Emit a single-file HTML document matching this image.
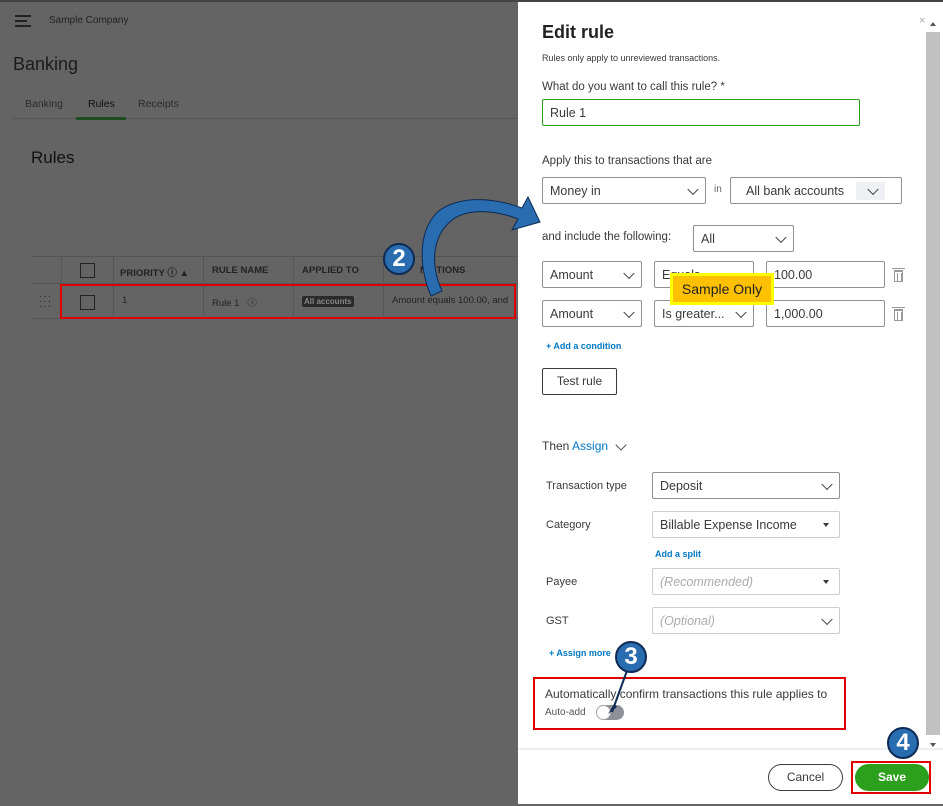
<!DOCTYPE html>
<html><head><meta charset="utf-8"><style>
*{box-sizing:border-box;margin:0;padding:0}
body{width:943px;height:806px;overflow:hidden;background:#646464;font-family:"Liberation Sans",sans-serif;position:relative;color:#222}
.a{position:absolute}
.box{position:absolute;border:1px solid #8d9096;border-radius:2px;background:#fff;font-size:12.5px;color:#393a3d;padding-left:7px;display:flex;align-items:center}
.chev{position:absolute;right:8px;top:50%;width:8px;height:8px;border-right:1.6px solid #393a3d;border-bottom:1.6px solid #393a3d;transform:translateY(-70%) rotate(45deg)}
.tri{position:absolute;right:10px;top:50%;border-left:3.5px solid transparent;border-right:3.5px solid transparent;border-top:4px solid #393a3d;transform:translateY(-50%)}
.lbl{position:absolute;font-size:11px;color:#393a3d}
.link{position:absolute;font-size:9px;color:#0077c5;font-weight:bold}
.badge{position:absolute;width:32px;height:32px;border-radius:50%;background:#2a6cb0;border:2px solid #0d2b55;color:#fff;font-weight:bold;font-size:24px;text-align:center;line-height:28px}
.tr{position:absolute;width:9px;height:12px;border:1px solid #999;border-top:2px solid #999}
.tr:before{content:"";position:absolute;left:-3px;top:-4px;width:13px;height:1px;background:#999}
.tr:after{content:"";position:absolute;left:2px;top:1px;width:3px;height:8px;border-left:1px solid #999;border-right:1px solid #999}
</style></head><body>
<div class="a" style="left:0;top:0;width:943px;height:2px;background:#444"></div>
<div class="a" style="left:15px;top:15px;width:16px;height:12px;border-top:2px solid #222;border-bottom:2px solid #222"></div>
<div class="a" style="left:15px;top:20px;width:12px;height:2px;background:#222"></div>
<div class="a" style="left:49px;top:15px;font-size:10px;color:#222">Sample Company</div>
<div class="a" style="left:13px;top:54px;font-size:18px;color:#1b1b1b">Banking</div>
<div class="a" style="left:25px;top:98px;font-size:10.5px;color:#2b2b2b">Banking</div>
<div class="a" style="left:88px;top:98px;font-size:10.5px;color:#111">Rules</div>
<div class="a" style="left:138px;top:98px;font-size:10.5px;color:#2b2b2b">Receipts</div>
<div class="a" style="left:13px;top:118px;width:505px;height:1px;background:#555"></div>
<div class="a" style="left:76px;top:117px;width:50px;height:3px;background:#1f4d1f"></div>
<div class="a" style="left:31px;top:148px;font-size:17px;color:#111">Rules</div>
<div class="a" style="left:31px;top:256px;width:487px;height:1px;background:#555"></div>
<div class="a" style="left:31px;top:283px;width:487px;height:1px;background:#555"></div>
<div class="a" style="left:31px;top:318px;width:487px;height:1px;background:#555"></div>
<div class="a" style="left:61px;top:256px;width:1px;height:62px;background:#555"></div>
<div class="a" style="left:113px;top:256px;width:1px;height:62px;background:#555"></div>
<div class="a" style="left:203px;top:256px;width:1px;height:62px;background:#555"></div>
<div class="a" style="left:293px;top:256px;width:1px;height:62px;background:#555"></div>
<div class="a" style="left:383px;top:256px;width:1px;height:62px;background:#555"></div>
<div class="a" style="left:80px;top:263px;width:15px;height:15px;border:1px solid #222"></div>
<div class="a" style="left:80px;top:295px;width:15px;height:15px;border:1px solid #222"></div>
<div class="a" style="left:120px;top:265px;font-size:9.5px;font-weight:bold;color:#222">PRIORITY ⓘ ▲</div>
<div class="a" style="left:212px;top:265px;font-size:9.5px;font-weight:bold;color:#222">RULE NAME</div>
<div class="a" style="left:302px;top:265px;font-size:9.5px;font-weight:bold;color:#222">APPLIED TO</div>
<div class="a" style="left:420px;top:265px;font-size:9.5px;font-weight:bold;color:#222">NDITIONS</div>
<div class="a" style="left:39px;top:294px;font-size:10px;color:#222;letter-spacing:1px;line-height:5px">···<br>···<br>···</div>
<div class="a" style="left:122px;top:295px;font-size:9.5px;color:#222">1</div>
<div class="a" style="left:212px;top:295px;font-size:9.5px;color:#222">Rule 1 &nbsp; ⓘ</div>
<div class="a" style="left:302px;top:296px;font-size:8px;font-weight:bold;color:#888;background:#2a2a2a;padding:1px 2px;border-radius:2px">All accounts</div>
<div class="a" style="left:392px;top:295px;font-size:9.5px;color:#222">Amount equals 100.00, and</div>
<div class="a" style="left:60px;top:284px;width:456px;height:35px;border:2px solid #e00000"></div>
<div class="a" style="left:518px;top:2px;width:425px;height:802px;background:#fff"></div>
<div class="a" style="left:926px;top:32px;width:14px;height:703px;background:#c1c1c1"></div>
<div class="a" style="left:919px;top:15px;font-size:11px;color:#aaa">×</div>
<div class="a" style="left:930px;top:22px;border-left:3px solid transparent;border-right:3px solid transparent;border-bottom:4px solid #555"></div>
<div class="a" style="left:930px;top:743px;border-left:3px solid transparent;border-right:3px solid transparent;border-top:4px solid #555"></div>
<div class="a" style="left:542px;top:22px;font-size:18px;font-weight:bold;color:#222">Edit rule</div>
<div class="a" style="left:542px;top:53px;font-size:9px;color:#393a3d">Rules only apply to unreviewed transactions.</div>
<div class="a" style="left:542px;top:81px;font-size:11.5px;color:#393a3d">What do you want to call this rule? *</div>
<div class="box" style="left:542px;top:99px;width:318px;height:27px;border-color:#2ca01c">Rule 1</div>
<div class="a" style="left:542px;top:155px;font-size:11.5px;color:#393a3d">Apply this to transactions that are</div>
<div class="box" style="left:542px;top:177px;width:164px;height:27px">Money in<span class="chev"></span></div>
<div class="a" style="left:714px;top:184px;font-size:10px;color:#666">in</div>
<div class="box" style="left:730px;top:177px;width:172px;height:27px;padding-left:15px">All bank accounts<span class="a" style="right:16px;top:4px;width:29px;height:18px;background:#eef0f3"></span><span class="chev" style="right:24px"></span></div>
<div class="a" style="left:542px;top:231px;font-size:11.5px;color:#393a3d">and include the following:</div>
<div class="box" style="left:693px;top:225px;width:101px;height:27px">All<span class="chev"></span></div>
<div class="box" style="left:542px;top:261px;width:100px;height:27px">Amount<span class="chev"></span></div>
<div class="box" style="left:654px;top:261px;width:100px;height:27px">Equals<span class="chev"></span></div>
<div class="box" style="left:766px;top:261px;width:119px;height:27px">100.00</div>
<div class="tr" style="left:894px;top:270px"></div>
<div class="box" style="left:542px;top:300px;width:100px;height:27px">Amount<span class="chev"></span></div>
<div class="box" style="left:654px;top:300px;width:100px;height:27px">Is greater...<span class="chev"></span></div>
<div class="box" style="left:766px;top:300px;width:119px;height:27px">1,000.00</div>
<div class="tr" style="left:894px;top:309px"></div>
<div class="a" style="left:670px;top:273px;width:104px;height:32px;background:#ffc000;border:3px solid #ffff00;font-size:14px;color:#222;text-align:center;line-height:26px">Sample Only</div>
<div class="link" style="left:546px;top:341px">+ Add a condition</div>
<div class="a" style="left:542px;top:368px;width:75px;height:27px;border:1px solid #393a3d;border-radius:2px;font-size:12px;text-align:center;line-height:25px;color:#393a3d">Test rule</div>
<div class="a" style="left:542px;top:439px;font-size:12px;color:#393a3d">Then <span style="color:#0077c5">Assign</span></div>
<div class="a" style="left:617px;top:441px;width:8px;height:8px;border-right:1.6px solid #555;border-bottom:1.6px solid #555;transform:rotate(45deg)"></div>
<div class="lbl" style="left:546px;top:480px">Transaction type</div>
<div class="box" style="left:652px;top:472px;width:188px;height:27px">Deposit<span class="chev"></span></div>
<div class="lbl" style="left:546px;top:519px">Category</div>
<div class="box" style="left:652px;top:511px;width:188px;height:27px;border-color:#ccc">Billable Expense Income<span class="tri"></span></div>
<div class="link" style="left:655px;top:549px">Add a split</div>
<div class="lbl" style="left:546px;top:576px">Payee</div>
<div class="box" style="left:652px;top:568px;width:188px;height:27px;border-color:#ccc;color:#aaa;font-style:italic">(Recommended)<span class="tri"></span></div>
<div class="lbl" style="left:546px;top:615px">GST</div>
<div class="box" style="left:652px;top:607px;width:188px;height:27px;border-color:#ccc;color:#aaa;font-style:italic">(Optional)<span class="chev"></span></div>
<div class="link" style="left:549px;top:648px">+ Assign more</div>
<div class="a" style="left:545px;top:687px;font-size:12px;color:#393a3d">Automatically confirm transactions this rule applies to</div>
<div class="a" style="left:545px;top:707px;font-size:10px;color:#555">Auto-add</div>
<div class="a" style="left:596px;top:705px;width:28px;height:15px;border-radius:8px;background:#8d9096"></div>
<div class="a" style="left:596px;top:705px;width:15px;height:15px;border-radius:50%;background:#fff;border:1px solid #aaa"></div>
<div class="a" style="left:533px;top:677px;width:313px;height:53px;border:2px solid #e00000"></div>
<div class="a" style="left:518px;top:748px;width:425px;height:2px;background:#eceef1"></div>
<div class="a" style="left:768px;top:764px;width:75px;height:27px;border:1.5px solid #393a3d;border-radius:14px;font-size:12px;text-align:center;line-height:24px;color:#393a3d">Cancel</div>
<div class="a" style="left:851px;top:761px;width:80px;height:33px;border:2px solid #e00000"></div>
<div class="a" style="left:855px;top:764px;width:74px;height:27px;background:#2ca01c;border-radius:14px;font-size:12px;text-align:center;line-height:27px;color:#fff;font-weight:bold">Save</div>
<svg class="a" style="left:0;top:0" width="943" height="806">
<path d="M431,296 C418,265 418,228 440,210 C462,195 495,198 522,208 L528,197 L540,222 L512,230 L518,219 C495,210 468,208 452,220 C432,236 430,265 442,291 Z" fill="#2a6cb0" stroke="#0d2b55" stroke-width="1"/>
<line x1="628" y1="668" x2="612" y2="712" stroke="#0d2b55" stroke-width="2"/>
<path d="M608,714 L614,704 L617,707 Z" fill="#0d2b55"/>
</svg>
<div class="badge" style="left:383px;top:243px">2</div>
<div class="badge" style="left:615px;top:641px">3</div>
<div class="badge" style="left:887px;top:727px">4</div>
</body></html>
